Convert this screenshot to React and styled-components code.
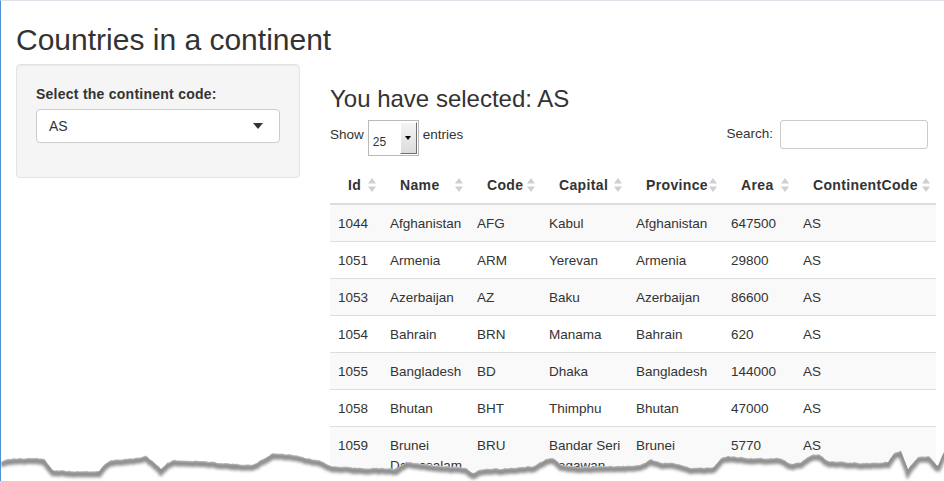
import React from 'react';
import styled, { createGlobalStyle } from 'styled-components';

const Colors = {
  text: '#333',
  border: '#ddd',
  stripe: '#f9f9f9',
  well: '#f5f5f5',
  frame: '#4f8fd6',
};

const GlobalStyle = createGlobalStyle`
  html, body {
    margin: 0;
    padding: 0;
    background: #fff;
  }
  body {
    font-family: "Liberation Sans", Arial, sans-serif;
    font-size: 13.5px;
    color: ${Colors.text};
  }
  * {
    box-sizing: border-box;
  }
`;

const Page = styled.div`
  position: relative;
  height: 481px;
  overflow: hidden;
  border-top: 1px solid #e2e2ea;
  border-left: 1px solid ${Colors.frame};
  padding-left: 15px;
`;

const Title = styled.h2`
  margin: 22px 0 8px;
  font-size: 30px;
  line-height: 33px;
  font-weight: 400;
`;

const Layout = styled.div`
  display: flex;
  gap: 30px;
  align-items: flex-start;
`;

const Well = styled.div`
  width: 284px;
  padding: 19px;
  background: ${Colors.well};
  border: 1px solid #e3e3e3;
  border-radius: 4px;
  box-shadow: inset 0 1px 1px rgba(0, 0, 0, 0.05);
`;

const Label = styled.label`
  display: block;
  font-size: 14px;
  font-weight: 700;
  line-height: 20px;
  letter-spacing: 0.25px;
  margin-bottom: 5px;
`;

const SelectBox = styled.div`
  display: flex;
  align-items: center;
  justify-content: space-between;
  height: 34px;
  padding: 0 16px 0 12px;
  background: #fff;
  border: 1px solid #ccc;
  border-radius: 4px;
  font-size: 14px;
  margin-bottom: 15px;
`;

const Caret = styled.span`
  width: 0;
  height: 0;
  border-left: 5.5px solid transparent;
  border-right: 5.5px solid transparent;
  border-top: 6px solid #333;
`;

const Main = styled.div`
  width: 606px;
`;

const SubTitle = styled.h3`
  margin: 22px 0 8px;
  font-size: 24px;
  line-height: 26px;
  font-weight: 400;
`;

const Controls = styled.div`
  display: flex;
  justify-content: space-between;
  align-items: flex-start;
  padding-right: 8px;
  height: 36px;
`;

const ControlGroup = styled.div`
  display: flex;
  align-items: flex-start;
`;

const ControlText = styled.span`
  line-height: 20px;
  margin-top: ${props => props.offset || 5}px;
`;

const LengthSelect = styled.div`
  display: flex;
  width: 51px;
  height: 36px;
  margin: 0 4px;
  border: 1px solid #b9b9b9;
  background: #fff;
  padding: 1px;
`;

const LengthValue = styled.span`
  flex: 1;
  font-size: 12px;
  padding: 13px 0 0 3px;
  line-height: 14px;
`;

const LengthButton = styled.span`
  width: 17px;
  display: flex;
  align-items: center;
  justify-content: center;
  background: linear-gradient(#f4f4f4, #dcdcdc);
  border-top: 1px solid #fff;
  border-left: 1px solid #fff;
  border-right: 1px solid #707070;
  border-bottom: 1px solid #707070;
  &::after {
    content: '';
    border-left: 3.5px solid transparent;
    border-right: 3.5px solid transparent;
    border-top: 4px solid #000;
  }
`;

const SearchInput = styled.div`
  width: 148px;
  height: 29px;
  margin-left: 7px;
  border: 1px solid #ccc;
  border-radius: 3px;
  background: #fff;
`;

const Table = styled.table`
  margin-top: 9px;
  width: 606px;
  table-layout: fixed;
  border-collapse: separate;
  border-spacing: 0;
`;

const Th = styled.th`
  position: relative;
  text-align: left;
  font-size: 14px;
  font-weight: 700;
  letter-spacing: 0.35px;
  line-height: 20px;
  padding: 10px 18px 8px 18px;
  border-bottom: 2px solid ${Colors.border};
  white-space: nowrap;
  width: ${props => props.w}px;
`;

const SortIcon = styled.svg`
  position: absolute;
  right: 6px;
  top: 13px;
`;

const Tr = styled.tr`
  background: ${props => (props.odd ? Colors.stripe : '#fff')};
  &:first-child td {
    border-top: 0;
  }
`;

const Td = styled.td`
  padding: 9px 5px 7px 8px;
  line-height: 20px;
  border-top: 1px solid ${Colors.border};
  vertical-align: top;
`;

const Tear = styled.svg`
  position: absolute;
  left: 0;
  bottom: 0;
  display: block;
`;

const columns = [
  ['Id', 52],
  ['Name', 87],
  ['Code', 72],
  ['Capital', 87],
  ['Province', 95],
  ['Area', 72],
  ['ContinentCode', 141],
];

const rows = [
  ['1044', 'Afghanistan', 'AFG', 'Kabul', 'Afghanistan', '647500', 'AS'],
  ['1051', 'Armenia', 'ARM', 'Yerevan', 'Armenia', '29800', 'AS'],
  ['1053', 'Azerbaijan', 'AZ', 'Baku', 'Azerbaijan', '86600', 'AS'],
  ['1054', 'Bahrain', 'BRN', 'Manama', 'Bahrain', '620', 'AS'],
  ['1055', 'Bangladesh', 'BD', 'Dhaka', 'Bangladesh', '144000', 'AS'],
  ['1058', 'Bhutan', 'BHT', 'Thimphu', 'Bhutan', '47000', 'AS'],
  ['1059', 'Brunei Darussalam', 'BRU', 'Bandar Seri Begawan', 'Brunei', '5770', 'AS'],
];

// rough outline of the torn paper edge, page coordinates
const tearBase = [
  [0, 461], [8, 459], [20, 458], [36, 458], [43, 459], [47, 464], [52, 470], [70, 471],
  [98, 471], [104, 464], [110, 460], [135, 458], [145, 456], [152, 461], [160, 469],
  [166, 463], [172, 460], [200, 461], [235, 464], [252, 465], [262, 459], [272, 453],
  [296, 455], [305, 458], [320, 461], [330, 466], [360, 468], [387, 468], [395, 469],
  [405, 462], [413, 463], [440, 466], [465, 468], [472, 473], [480, 469], [510, 468],
  [533, 466], [545, 459], [552, 458], [560, 465], [580, 467], [607, 466], [620, 466],
  [640, 465], [650, 459], [660, 463], [670, 462], [690, 468], [713, 467], [720, 458],
  [727, 456], [750, 458], [780, 458], [790, 464], [800, 462], [810, 455], [818, 454],
  [827, 461], [860, 463], [887, 462], [893, 453], [900, 451], [907, 469], [917, 457],
  [928, 456], [937, 466], [944, 449],
];

const tearPath = () => {
  let seed = 11;
  const rnd = () => {
    seed = (seed * 9301 + 49297) % 233280;
    return seed / 233280;
  };
  const pts = [];
  for (let i = 0; i < tearBase.length - 1; i++) {
    const [x0, y0] = tearBase[i];
    const [x1, y1] = tearBase[i + 1];
    for (let x = x0; x < x1; x += 2) {
      const t = (x - x0) / (x1 - x0);
      const y = y0 + (y1 - y0) * t + (rnd() - 0.5) * 1.1;
      pts.push(`${x} ${y.toFixed(1)}`);
    }
  }
  pts.push('944 449');
  return 'M' + pts.join(' L');
};

const edge = tearPath();

const SortArrows = () => (
  <SortIcon width="8" height="14" viewBox="0 0 8 14">
    <polygon points="4,0 8,5.5 0,5.5" fill="#cfcfcf" />
    <polygon points="0,8.5 8,8.5 4,14" fill="#cfcfcf" />
  </SortIcon>
);

const App = () => (
  <Page>
    <GlobalStyle />
    <Title>Countries in a continent</Title>
    <Layout>
      <Well>
        <Label>Select the continent code:</Label>
        <SelectBox>
          <span>AS</span>
          <Caret />
        </SelectBox>
      </Well>
      <Main>
        <SubTitle>You have selected: AS</SubTitle>
        <Controls>
          <ControlGroup>
            <ControlText>Show</ControlText>
            <LengthSelect>
              <LengthValue>25</LengthValue>
              <LengthButton />
            </LengthSelect>
            <ControlText>entries</ControlText>
          </ControlGroup>
          <ControlGroup>
            <ControlText offset={4}>Search:</ControlText>
            <SearchInput />
          </ControlGroup>
        </Controls>
        <Table>
          <thead>
            <tr>
              {columns.map(([name, w]) => (
                <Th key={name} w={w}>
                  {name}
                  <SortArrows />
                </Th>
              ))}
            </tr>
          </thead>
          <tbody>
            {rows.map((row, i) => (
              <Tr key={row[0]} odd={i % 2 === 0}>
                {row.map((cell, j) => (
                  <Td key={j}>{cell}</Td>
                ))}
              </Tr>
            ))}
          </tbody>
        </Table>
      </Main>
    </Layout>
    <Tear width="944" height="40" viewBox="0 441 944 40">
      <defs>
        <clipPath id="below">
          <path d={`${edge} L944 481 L0 481 Z`} />
        </clipPath>
        <filter id="soft" x="-5%" y="-50%" width="110%" height="200%">
          <feGaussianBlur stdDeviation="1.5" />
        </filter>
      </defs>
      <path d={`${edge} L944 481 L0 481 Z`} fill="#fff" />
      <g clipPath="url(#below)">
        <path
          d={edge}
          transform="translate(0 3)"
          fill="none"
          stroke="#8e8e8e"
          strokeWidth="6"
          filter="url(#soft)"
        />
      </g>
    </Tear>
  </Page>
);

export default App;
